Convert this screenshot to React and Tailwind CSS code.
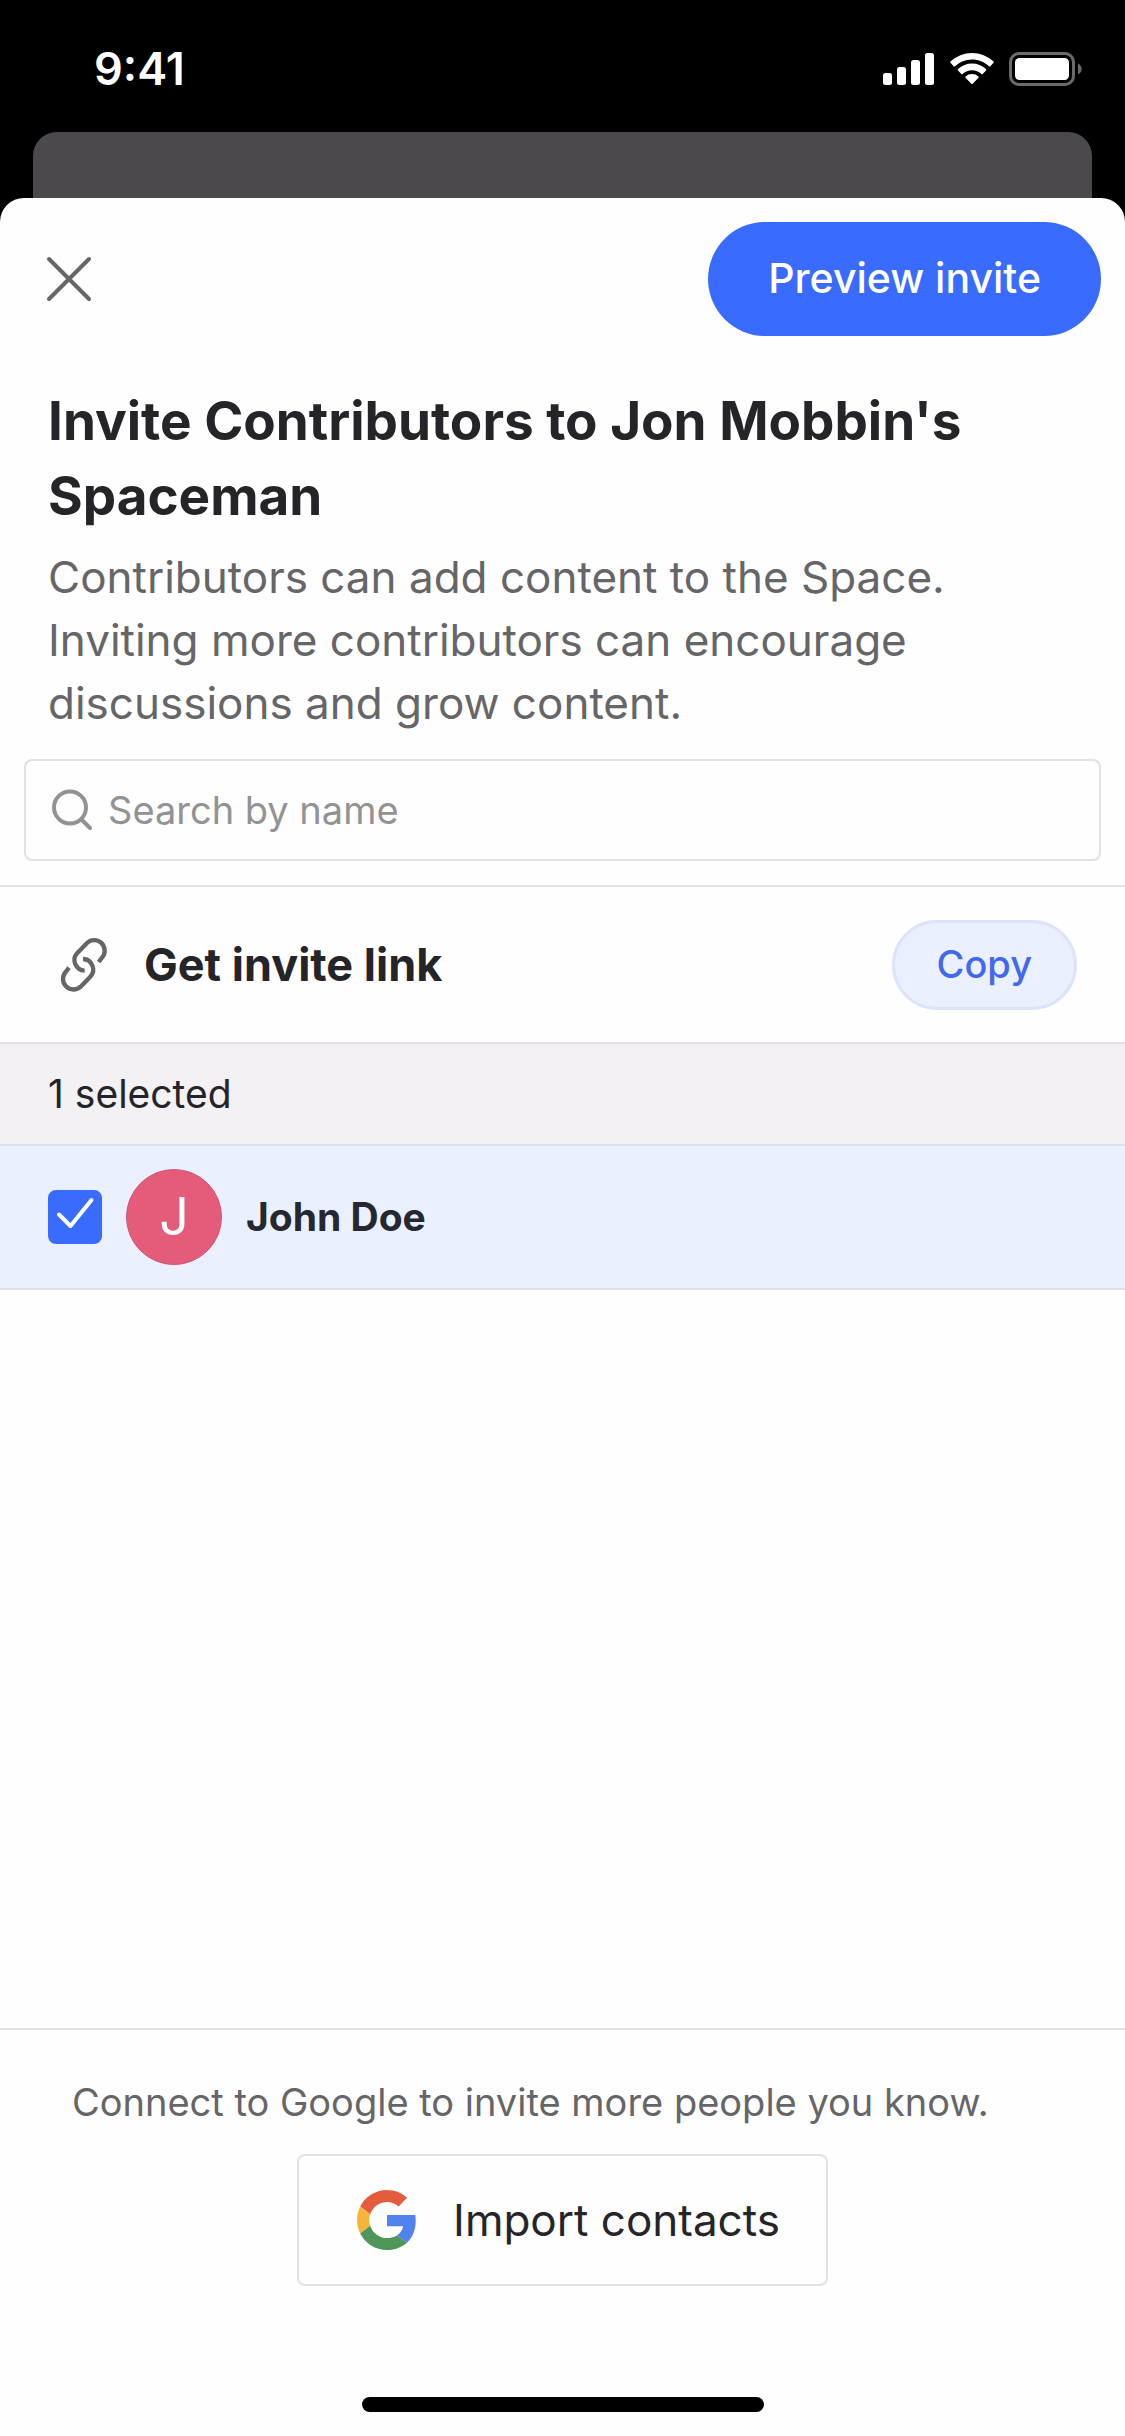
import { useState } from "react";

function StatusBar() {
  return (
    <div className="flex h-[132px] items-center justify-between pt-1.5 pr-[42px] pl-[94px] text-white">
      <span className="text-[45px] font-semibold leading-[60px]">9:41</span>
      <div className="flex items-center gap-[14px]">
        <svg viewBox="0 0 52 34" className="h-[34px] w-[52px]" fill="currentColor">
          <rect x="0" y="21" width="9" height="12" rx="2.5" />
          <rect x="14" y="15" width="9" height="18" rx="2.5" />
          <rect x="28" y="8" width="9" height="25" rx="2.5" />
          <rect x="42" y="1" width="9" height="32" rx="2.5" />
        </svg>
        <svg viewBox="0 0 46 34" className="h-[34px] w-[46px]" fill="currentColor">
          <path d="M23 7.4c6.4 0 12.4 2.4 17 6.8.3.3.9.3 1.3 0l3.3-3.4c.4-.4.4-1 0-1.3A31.5 31.5 0 0 0 1.4 9.5c-.4.3-.4.9 0 1.3l3.3 3.4c.4.3 1 .3 1.3 0A24.5 24.5 0 0 1 23 7.4z" />
          <path d="M23 18.3c3.5 0 6.8 1.3 9.4 3.6.4.3.9.3 1.3 0l3.3-3.4c.4-.4.4-1 0-1.4a20.5 20.5 0 0 0-28 0c-.4.4-.4 1 0 1.4l3.3 3.4c.4.3.9.3 1.3 0A14 14 0 0 1 23 18.3z" />
          <path d="M29.5 25.8c.4-.4.4-1 0-1.3a10 10 0 0 0-13 0c-.4.3-.4.9 0 1.3l5.8 5.9c.4.4 1 .4 1.4 0z" />
        </svg>
        <svg viewBox="0 0 74 34" className="h-[34px] w-[74px]">
          <rect x="1.5" y="1.5" width="63" height="31" rx="8.5" fill="none" stroke="#6b6b6d" strokeWidth="3" />
          <rect x="6" y="6" width="54" height="22" rx="4.5" fill="currentColor" />
          <path d="M69 11.5c2.2 1 3.6 3.1 3.6 5.5s-1.4 4.5-3.6 5.5z" fill="#6b6b6d" />
        </svg>
      </div>
    </div>
  );
}

function GoogleIcon() {
  return (
    <svg viewBox="0 0 48 48" className="size-[60px]">
      <path fill="#e45c3c" d="M24 9.5c3.54 0 6.71 1.22 9.21 3.6l6.85-6.85C35.9 2.38 30.47 0 24 0 14.62 0 6.51 5.38 2.56 13.22l7.98 6.19C12.43 13.72 17.74 9.5 24 9.5z" />
      <path fill="#4f83f0" d="M46.98 24.55c0-1.57-.15-3.09-.38-4.55H24v9.02h12.94c-.58 2.96-2.26 5.48-4.78 7.18l7.73 6c4.51-4.18 7.09-10.36 7.09-17.65z" />
      <path fill="#f6b53a" d="M10.53 28.59c-.48-1.45-.76-2.99-.76-4.59s.27-3.14.76-4.59l-7.98-6.19C.92 16.46 0 20.12 0 24c0 3.88.92 7.54 2.56 10.78l7.97-6.19z" />
      <path fill="#50955a" d="M24 48c6.48 0 11.93-2.13 15.89-5.81l-7.73-6c-2.15 1.45-4.92 2.3-8.16 2.3-6.26 0-11.57-4.22-13.47-9.91l-7.98 6.19C6.51 42.62 14.62 48 24 48z" />
    </svg>
  );
}

function SheetHeader() {
  return (
    <header className="flex items-center justify-between py-6 pr-6 pl-[45px]">
      <button type="button" aria-label="Close" className="text-[#666568]">
        <svg viewBox="0 0 48 48" className="size-12" fill="none" stroke="currentColor" strokeWidth="4" strokeLinecap="round">
          <path d="M4 4l40 40M44 4L4 44" />
        </svg>
      </button>
      <button type="button" className="h-[114px] rounded-full bg-[#396bff] px-[60px] text-[41px] font-medium text-white">
        Preview invite
      </button>
    </header>
  );
}

function SearchField({ value, onChange }) {
  return (
    <label className="mx-6 mt-6 flex h-[102px] items-center gap-4 rounded-lg border-2 border-[#e2e1e5] px-6">
      <svg viewBox="0 0 42 42" className="size-[42px] shrink-0 text-[#939295]" fill="none" stroke="currentColor" strokeWidth="4" strokeLinecap="round">
        <circle cx="20" cy="18.5" r="16" />
        <path d="M31.5 30.5L40 39" />
      </svg>
      <input
        type="text"
        aria-label="Search by name"
        placeholder="Search by name"
        value={value}
        onChange={(e) => onChange(e.target.value)}
        className="w-full min-w-0 bg-transparent text-[38px] text-[#252428] outline-none placeholder:text-[#939295]"
      />
    </label>
  );
}

function InviteLinkRow() {
  return (
    <div className="mt-6 flex h-[159px] items-center border-y-2 border-[#e2e1e5] pr-12 pl-[60px]">
      <svg viewBox="60 48 144 168" className="h-14 w-12 text-[#666568]" fill="none" stroke="currentColor" strokeWidth="13">
        <path d="M176 123L186 110A31.5 31.5 0 0 0 141 66L112 96A31.5 31.5 0 0 0 134 149" />
        <path d="M87 140L77 153A31.5 31.5 0 0 0 122 197L151 167A31.5 31.5 0 0 0 129 114" />
      </svg>
      <span className="ml-9 text-[45px] font-bold text-[#252428]">Get invite link</span>
      <button type="button" className="ml-auto h-[90px] rounded-full border-[3px] border-[#dce3fb] bg-[#eaf0ff] px-[42px] text-[38px] font-medium text-[#4069ee]">
        Copy
      </button>
    </div>
  );
}

function ContactRow({ name, color }) {
  const [checked, setChecked] = useState(true);

  return (
    <label className="flex h-[144px] items-center border-b-2 border-[#dfe1e8] bg-[#eaf0ff] px-12">
      <span className="relative size-[54px]">
        <input
          type="checkbox"
          checked={checked}
          onChange={() => setChecked(!checked)}
          className="block size-[54px] appearance-none rounded-lg border-2 border-[#396bff] bg-white checked:bg-[#396bff]"
        />
        {checked && (
          <svg viewBox="0 0 54 54" className="pointer-events-none absolute inset-0 size-[54px]" fill="none" stroke="white" strokeWidth="4" strokeLinecap="round" strokeLinejoin="round">
            <path d="M11 24.5L22.5 36L43.5 10" />
          </svg>
        )}
      </span>
      <span className="ml-6 flex size-24 items-center justify-center rounded-full border border-[#cf5672] text-[52px] text-white" style={{ backgroundColor: color }}>
        {name[0]}
      </span>
      <span className="ml-6 text-[39px] font-bold text-[#252830]">{name}</span>
    </label>
  );
}

function Footer() {
  return (
    <footer className="mt-auto flex flex-col border-t-2 border-[#e2e1e5] pt-[42px]">
      <p className="px-[72px] text-[38px] leading-[60px] text-[#666568]">Connect to Google to invite more people you know.</p>
      <button type="button" className="mt-[22px] flex h-[132px] items-center gap-9 self-center rounded-lg border-2 border-[#e2e1e5] pr-[46px] pl-[58px] text-[44px] text-[#252428]">
        <GoogleIcon />
        Import contacts
      </button>
      <div className="mt-[111px] mb-6 h-[15px] w-[402px] self-center rounded-full bg-black" />
    </footer>
  );
}

export default function App() {
  const [query, setQuery] = useState("");

  return (
    <div className="flex min-h-screen flex-col bg-black font-['Inter',sans-serif]">
      <StatusBar />
      <div className="mx-[33px] h-[66px] rounded-t-3xl bg-[#4b494d]" />
      <main className="flex flex-1 flex-col rounded-t-3xl bg-[#fefefe]">
        <SheetHeader />
        <section className="px-12 pt-6">
          <h1 className="text-[53px] leading-[75px] font-bold text-[#252428]">
            Invite Contributors to Jon Mobbin's Spaceman
          </h1>
          <p className="mt-3 text-[44px] leading-[63px] text-[#666568]">
            Contributors can add content to the Space. Inviting more contributors can encourage discussions and grow content.
          </p>
        </section>
        <SearchField value={query} onChange={setQuery} />
        <InviteLinkRow />
        <div className="flex h-[102px] items-center border-b-2 border-[#dfe1e8] bg-[#f3f1f4] px-12 text-[39px] text-[#252428]">
          1 selected
        </div>
        <ContactRow name="John Doe" color="#e55c7b" />
        <Footer />
      </main>
    </div>
  );
}
